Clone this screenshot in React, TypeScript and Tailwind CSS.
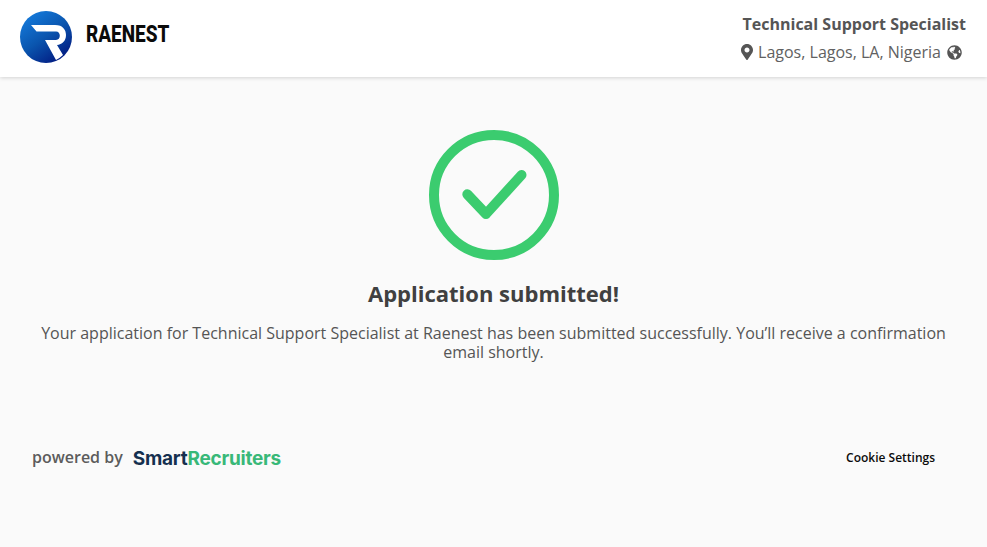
import { FaGlobeAmericas, FaMapMarkerAlt } from 'react-icons/fa';

function RaenestMark() {
  return (
    <svg width="52" height="52" viewBox="0 0 52 52" className="shrink-0">
      <defs>
        <linearGradient id="raenest-blue" x1="0.15" y1="0.1" x2="0.75" y2="0.95">
          <stop offset="0" stopColor="#1478d8" />
          <stop offset="0.5" stopColor="#0a55ae" />
          <stop offset="1" stopColor="#021d83" />
        </linearGradient>
      </defs>
      <circle cx="26" cy="26" r="26" fill="url(#raenest-blue)" />
      <path
        d="M11 14 H35 C43 14 46 19 46 24 C46 30 42 33.500 37 34 L43 44 Q40.500 46.500 36 49 L25 29 H36 C38.500 29 39.800 27 39.800 24.800 C39.800 22.500 38.500 20.500 36 20.500 H16.500 Z"
        fill="#ffffff"
      />
    </svg>
  );
}

export default function App() {
  return (
    <div className="min-h-[547px] bg-[#fafafa] font-['Open_Sans',sans-serif] text-[#4a4a4a]">
      {/* header */}
      <header className="flex h-[77px] items-start justify-between bg-white pt-[11px] pl-5 pr-[21px] shadow-[0_1px_4px_rgba(0,0,0,0.16)]">
        <div className="flex items-center gap-[14px]">
          <RaenestMark />
          <span className="mb-[6px] inline-block w-[84px] origin-left scale-x-[0.825] font-['Roboto',sans-serif] text-[23px] leading-none font-extrabold whitespace-nowrap text-[#0b0b0b]">
            RAENEST
          </span>
        </div>
        <div className="flex flex-col items-end pt-[2px]">
          <h2 className="text-[16px] leading-[22px] font-bold text-[#555555]">Technical Support Specialist</h2>
          <div className="mt-[6px] flex items-center pr-[4px] text-[16px] leading-[22px] text-[#616161]">
            <FaMapMarkerAlt size={16} className="mr-[3px] text-[#555555]" />
            <span>Lagos, Lagos, LA, Nigeria</span>
            <FaGlobeAmericas size={15} className="ml-[6px] text-[#555555]" />
          </div>
        </div>
      </header>

      {/* confirmation */}
      <main className="flex flex-col items-center px-[40px] pt-[53px]">
        <svg width="130" height="130" viewBox="0 0 130 130">
          <circle cx="65" cy="65" r="60" fill="none" stroke="#3bcc6f" strokeWidth="10" />
          <path
            d="M38.300 64.300 L57 84 L92.500 45"
            fill="none"
            stroke="#3bcc6f"
            strokeWidth="10"
            strokeLinecap="round"
            strokeLinejoin="round"
          />
        </svg>
        <h1 className="mt-[18px] text-[22px] leading-[30px] font-bold text-[#404040]">Application submitted!</h1>
        <p className="mt-[16px] max-w-[907px] text-center text-[16px] leading-[19px] text-[#555555]">
          Your application for Technical Support Specialist at Raenest has been submitted successfully. You’ll receive a
          confirmation email shortly.
        </p>
      </main>

      {/* footer */}
      <footer className="mt-[83px] flex h-[24px] items-center justify-between pr-[52px] pl-[32px]">
        <div className="flex h-[24px] items-center gap-[10px]">
          <span className="text-[16px] leading-[22px] font-semibold text-[#5c5c5c]">powered by</span>
          <span className="mt-[4px] font-['Inter',sans-serif] text-[19px] leading-[24px] font-bold tracking-[-0.25px]">
            <span className="text-[#15304f]">Smart</span>
            <span className="text-[#38b878]">Recruiters</span>
          </span>
        </div>
        <button className="mt-[2px] text-[12px] leading-[16px] font-semibold text-[#0b0b0b]">Cookie Settings</button>
      </footer>
    </div>
  );
}
